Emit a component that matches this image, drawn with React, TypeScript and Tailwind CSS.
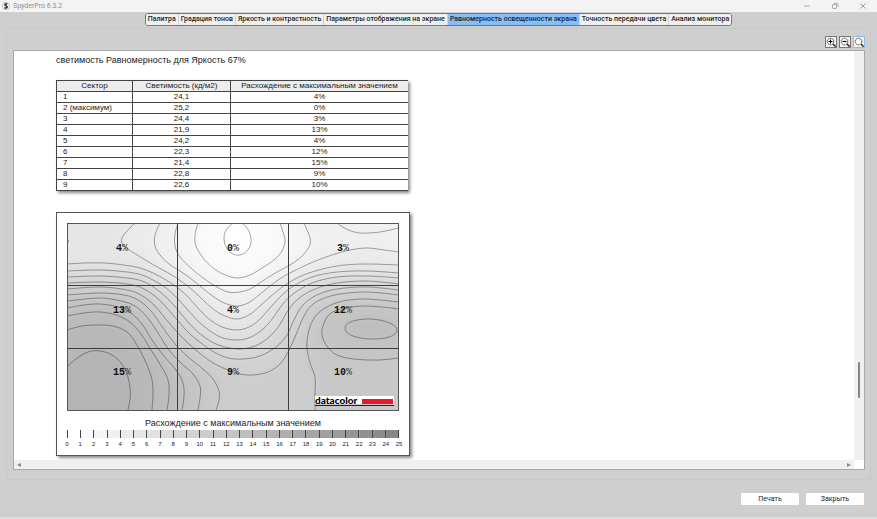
import React from "react";

type Pt = [number, number];

interface Contour {
  line: Pt[];
  rim: Pt[];
}

const OUT_TOP: Pt[] = [[440, 180], [440, 450], [20, 450], [20, 180]];
const OUT_BOTTOM: Pt[] = [[440, 450], [20, 450]];

const contours: Contour[] = [
  {
    line: [[233, 223], [226, 230], [224, 239], [227, 249], [233, 254], [240, 255], [247, 251], [251, 243], [250, 234], [247, 228], [242, 223]],
    rim: [[242, 180], ...OUT_TOP, [233, 180]],
  },
  {
    line: [[198, 223], [195, 235], [196, 246], [203, 258], [212, 267], [223, 274], [237, 278], [250, 275], [262, 268], [274, 260], [282, 251], [285, 241], [283, 232], [280, 223]],
    rim: [[280, 180], ...OUT_TOP, [198, 180]],
  },
  {
    line: [[178, 223], [175, 234], [175, 246], [180, 257], [193, 270], [206, 280], [217, 287], [228, 292], [240, 292], [252, 288], [264, 280], [277, 272], [290, 265], [301, 257], [309, 247], [310, 238], [304, 223]],
    rim: [[304, 180], ...OUT_TOP, [178, 180]],
  },
  {
    line: [[160, 223], [155, 235], [155, 246], [160, 255], [169, 264], [180, 271], [190, 278], [200, 286], [210, 294], [222, 302], [236, 306], [248, 303], [259, 295], [270, 286], [281, 278], [292, 272], [313, 262], [335, 254], [350, 250], [367, 248], [384, 250], [399, 252]],
    rim: [[440, 254], [440, 450], [20, 450], [20, 180], [160, 180]],
  },
  {
    line: [[135, 223], [127, 231], [122, 238], [122, 243], [128, 249], [147, 261], [161, 269], [175, 277], [190, 288], [201, 298], [213, 309], [225, 316], [237, 319], [249, 315], [259, 307], [270, 297], [281, 288], [295, 279], [312, 272], [337, 266], [364, 264], [399, 265]],
    rim: [[440, 266], [440, 450], [20, 450], [20, 180], [135, 180]],
  },
  {
    line: [[67, 264], [85, 263], [105, 263], [124, 265], [140, 268], [153, 273], [166, 280], [178, 288], [188, 297], [198, 308], [209, 319], [222, 327], [237, 330], [249, 327], [259, 320], [270, 308], [280, 297], [292, 287], [312, 277], [337, 272], [367, 271], [399, 273]],
    rim: [[440, 274], ...OUT_BOTTOM, [20, 265]],
  },
  {
    line: [[67, 271], [100, 270], [127, 272], [142, 275], [153, 280], [166, 288], [177, 298], [187, 309], [198, 321], [210, 331], [223, 338], [238, 340], [251, 337], [263, 329], [273, 318], [282, 305], [293, 294], [312, 283], [337, 277], [367, 276], [399, 278]],
    rim: [[440, 279], ...OUT_BOTTOM, [20, 272]],
  },
  {
    line: [[67, 277], [100, 276], [127, 278], [142, 281], [155, 288], [167, 298], [177, 309], [188, 322], [199, 333], [212, 342], [225, 347], [240, 349], [255, 346], [268, 338], [279, 326], [287, 312], [298, 299], [315, 289], [337, 283], [367, 281], [399, 284]],
    rim: [[440, 285], ...OUT_BOTTOM, [20, 278]],
  },
  {
    line: [[67, 283], [100, 282], [127, 284], [142, 288], [156, 297], [167, 308], [178, 321], [189, 333], [201, 343], [214, 352], [228, 358], [243, 359], [260, 356], [276, 347], [287, 335], [294, 320], [303, 305], [317, 295], [337, 289], [367, 287], [399, 290]],
    rim: [[440, 291], ...OUT_BOTTOM, [20, 284]],
  },
  {
    line: [[67, 289], [100, 287], [127, 290], [141, 295], [154, 305], [165, 318], [177, 332], [189, 344], [202, 355], [215, 364], [228, 370], [240, 374], [253, 375], [268, 372], [280, 364], [288, 352], [295, 337], [303, 318], [311, 306], [322, 299], [340, 294], [367, 292], [399, 295]],
    rim: [[440, 296], ...OUT_BOTTOM, [20, 290]],
  },
  {
    line: [[67, 295], [100, 293], [124, 295], [138, 300], [151, 311], [163, 328], [175, 344], [188, 357], [203, 369], [213, 379], [219, 391], [219, 400], [216, 410]],
    rim: [[214, 450], [20, 450], [20, 296]],
  },
  {
    line: [[67, 301], [100, 298], [121, 301], [135, 306], [147, 317], [158, 333], [169, 350], [181, 363], [193, 374], [200, 386], [200, 398], [198, 410]],
    rim: [[196, 450], [20, 450], [20, 302]],
  },
  {
    line: [[67, 308], [84, 305], [100, 304], [118, 307], [131, 313], [142, 324], [152, 340], [163, 355], [176, 370], [183, 383], [184, 396], [182, 410]],
    rim: [[181, 450], [20, 450], [20, 310]],
  },
  {
    line: [[67, 316], [84, 313], [100, 312], [116, 315], [130, 322], [141, 334], [151, 350], [161, 366], [168, 380], [169, 395], [167, 410]],
    rim: [[166, 450], [20, 450], [20, 318]],
  },
  {
    line: [[67, 330], [82, 326], [97, 325], [113, 326], [127, 332], [137, 345], [147, 365], [152, 380], [153, 394], [152, 410]],
    rim: [[151, 450], [20, 450], [20, 335]],
  },
  {
    line: [[67, 367], [76, 359], [88, 352], [100, 351], [112, 355], [121, 363], [127, 374], [130, 388], [130, 399], [128, 410]],
    rim: [[127, 450], [20, 450], [20, 385]],
  },
  {
    line: [[315, 410], [315, 394], [315, 377], [310, 363], [307, 348], [308, 334], [313, 320], [322, 310], [339, 302], [364, 299], [399, 302]],
    rim: [[440, 303], [440, 450], [315, 450]],
  },
  {
    line: [[399, 358], [378, 360], [354, 359], [337, 355], [327, 346], [322, 335], [324, 323], [331, 313], [345, 308], [364, 306], [382, 307], [399, 309]],
    rim: [[440, 311], [440, 357]],
  },
];

function smooth(points: Pt[]): string {
  let d = `M${points[0][0]} ${points[0][1]}`;
  for (let i = 0; i < points.length - 1; i++) {
    const a = points[Math.max(i - 1, 0)];
    const b = points[i];
    const c = points[i + 1];
    const e = points[Math.min(i + 2, points.length - 1)];
    d += ` C${b[0] + (c[0] - a[0]) / 6} ${b[1] + (c[1] - a[1]) / 6} ${c[0] - (e[0] - b[0]) / 6} ${c[1] - (e[1] - b[1]) / 6} ${c[0]} ${c[1]}`;
  }
  return d;
}

const area = (c: Contour) => `${smooth(c.line)} ${c.rim.map((p) => `L${p[0]} ${p[1]}`).join(" ")} Z`;

const ELLIPSE = "M345 328 C345 322 357 319 368 319 C382 319 397 324 397 330 C397 336 386 339 373 339 C358 339 345 335 345 328 Z";

const sectorLabels: [number, number, string][] = [
  [116, 251, "4"], [227, 251, "0"], [337, 251, "3"],
  [113, 313, "13"], [227, 313, "4"], [334, 313, "12"],
  [113, 375, "15"], [227, 375, "9"], [334, 375, "10"],
];

function UniformityMap() {
  return (
    <svg viewBox="67 223 332 188" className="block w-full" role="img" aria-label="Равномерность">
      <defs>
        <clipPath id="frame">
          <rect x="67" y="223" width="332" height="188" />
        </clipPath>
        <filter id="soften" filterUnits="userSpaceOnUse" x="20" y="180" width="420" height="270" colorInterpolationFilters="sRGB">
          <feGaussianBlur stdDeviation="7" />
        </filter>
      </defs>
      <rect x="67" y="223" width="332" height="188" fill="#fff" />
      <g clipPath="url(#frame)">
        <g filter="url(#soften)">
          <rect x="20" y="180" width="420" height="270" fill="#fff" />
          {contours.map((c, i) => (
            <path key={i} d={area(c)} fill="#000" fillOpacity="0.02" />
          ))}
          <path d={ELLIPSE} fill="#000" fillOpacity="0.03" />
        </g>
        <g fill="none" stroke="#000" strokeOpacity="0.38" strokeWidth="0.9">
          {contours.map((c, i) => (
            <path key={i} d={smooth(c.line)} />
          ))}
          <path d={ELLIPSE} />
          <path d="M337 223 C347 231 357 234 368 233 C380 233 389 230 399 228" />
          <path d="M67 239 C69 240 69 242 67 243" />
        </g>
      </g>
      <g fill="none" stroke="#3c3c3c" strokeWidth="1">
        <rect x="67.5" y="223.5" width="331" height="187" stroke="#555" />
        <path d="M177.500 223 V411 M288.500 223 V411 M67 285.500 H399 M67 348.500 H399" />
      </g>
      <g className="font-['Liberation_Mono',monospace] text-[10px] font-bold">
        {sectorLabels.map(([x, y, value]) => (
          <text key={`${x}-${y}`} x={x} y={y} fill="#111">
            {value}
            <tspan fill="#333" className="font-normal">%</tspan>
          </text>
        ))}
      </g>
      <rect x="315" y="396" width="79" height="8" fill="#fff" />
      <text x="315" y="404" fill="#000" className="font-['Lato',sans-serif] text-[10px] font-black">
        datacolor
      </text>
      <rect x="362" y="399" width="31" height="5" fill="#e8192c" />
      <rect x="315" y="405" width="79" height="1" fill="#222" />
    </svg>
  );
}

const steps = Array.from({ length: 26 }, (_, i) => i);

function Legend() {
  return (
    <svg viewBox="0 0 332 20" className="block w-full overflow-visible">
      {steps.slice(0, 25).map((i) => {
        const v = 255 - i * 5;
        return <rect key={i} x={i * 13.28} y="1" width="13.4" height="8" fill={`rgb(${v},${v},${v})`} />;
      })}
      {steps.map((i) => (
        <rect key={i} x={Math.round(i * 13.24)} y="1" width="1" height="8" fill="#444" />
      ))}
      {steps.map((i) => (
        <text key={i} x={i * 13.28} y="17" textAnchor="middle" fill="#222" className="font-['Liberation_Sans',Arial,sans-serif] text-[6px]">
          {i}
        </text>
      ))}
    </svg>
  );
}

const rows = [
  ["1", "24,1", "4%"],
  ["2 (максимум)", "25,2", "0%"],
  ["3", "24,4", "3%"],
  ["4", "21,9", "13%"],
  ["5", "24,2", "4%"],
  ["6", "22,3", "12%"],
  ["7", "21,4", "15%"],
  ["8", "22,8", "9%"],
  ["9", "22,6", "10%"],
];

const tabs = [
  "Палитра",
  "Градация тонов",
  "Яркость и контрастность",
  "Параметры отображения на экране",
  "Равномерность освещенности экрана",
  "Точность передачи цвета",
  "Анализ монитора",
];

function ZoomButton({ label, sign, active }: { label: string; sign?: string; active?: boolean }) {
  return (
    <button
      aria-label={label}
      className={`size-3 border bg-[#f4f4f4] ${active ? "border-[#8fbbe6]" : "border-[#777]"}`}
    >
      <svg viewBox="0 0 10 10" className="block size-full" fill="none" stroke="#222">
        <circle cx="4.500" cy="4.500" r="3.300" strokeWidth="0.8" strokeDasharray="1.6 0.5" fill="#fff" />
        <path d="M7 7 L9.600 9.600" strokeWidth="1.500" />
        {sign && <path d={sign} strokeWidth="1.200" stroke="#000" />}
      </svg>
    </button>
  );
}

export default function App() {
  return (
    <div className="flex h-screen flex-col overflow-hidden bg-[#cfcfcf] font-['Roboto','Open_Sans',sans-serif] text-[#222]">
      <header className="flex h-3 shrink-0 items-center justify-between bg-[#f3f3f3] pl-[2px]">
        <div className="flex items-center gap-[3px] text-[7px] leading-3 text-[#909090]">
          <svg viewBox="0 0 8 8" className="size-2">
            <circle cx="4" cy="4" r="3.600" fill="#fff" stroke="#999" strokeWidth="0.6" />
            <path d="M5.400 2.300 C4.600 1.700 2.800 1.800 2.900 3 C3 4.200 5.300 3.700 5.300 5 C5.200 6.200 3.400 6.300 2.500 5.600" fill="none" stroke="#111" strokeWidth="1.300" />
          </svg>
          <span>SpyderPro 6.3.2</span>
        </div>
        <div className="flex items-center gap-5 pr-[10px]">
          <button aria-label="Свернуть" className="size-2">
            <svg viewBox="0 0 8 8" className="block size-full" fill="none" stroke="#999" strokeWidth="0.8"><path d="M1 4 H7" /></svg>
          </button>
          <button aria-label="Восстановить" className="size-2">
            <svg viewBox="0 0 8 8" className="block size-full" fill="none" stroke="#999" strokeWidth="0.8">
              <rect x="1.500" y="2.500" width="4" height="4" rx="0.600" />
              <path d="M3 1.200 H6 Q6.900 1.200 6.900 2.200 V5" />
            </svg>
          </button>
          <button aria-label="Закрыть окно" className="size-2">
            <svg viewBox="0 0 8 8" className="block size-full" fill="none" stroke="#888" strokeWidth="0.8"><path d="M1.500 1.500 L6.500 6.500 M6.500 1.500 L1.500 6.500" /></svg>
          </button>
        </div>
      </header>

      <nav className="mt-px flex shrink-0 justify-center">
        <div className="flex h-[13px] overflow-hidden rounded-[3px] border border-[#777] bg-[#f0f0f0]">
          {tabs.map((tab, i) => (
            <button
              key={tab}
              className={`px-[2px] text-[7px] leading-[11px] font-medium whitespace-nowrap text-[#222] ${
                i === 4 ? "bg-[#86bff8]" : "bg-[#f0f0f0]"
              } ${i > 0 ? "border-l border-[#d0d0d0]" : ""}`}
            >
              {tab}
            </button>
          ))}
        </div>
      </nav>

      <main className="mx-[6px] mt-[2px] flex min-h-0 flex-1 flex-col rounded-[3px] border border-[#c8c8c8] pr-[5px] pb-[9px] pl-[6px]">
        <div className="mt-[7px] flex shrink-0 justify-end gap-[2px]">
          <ZoomButton label="Увеличить" sign="M2.500 4.500 H6.500 M4.500 2.500 V6.500" />
          <ZoomButton label="Уменьшить" sign="M2.500 4.500 H6.500" />
          <ZoomButton label="По размеру" active />
        </div>

        <div className="mt-[2px] flex min-h-0 flex-1 flex-col border border-[#a8a8a8] bg-white">
          <div className="flex min-h-0 flex-1">
            <div className="min-w-0 flex-1 overflow-hidden pl-[42px] font-['Liberation_Sans',Arial,sans-serif] text-[#222]">
              <h1 className="mt-[3px] text-[9px] leading-3">светимость Равномерность для Яркость 67%</h1>
              <table className="mt-[14px] w-[352px] table-fixed border-collapse border-y border-l border-[#444] text-[8px] leading-[10px] shadow-[2px_2px_3px_#888]">
                <colgroup>
                  <col className="w-[76px]" />
                  <col className="w-[98px]" />
                  <col />
                </colgroup>
                <thead>
                  <tr className="h-[11px] bg-[#ececec]">
                    <th className="border-r border-b border-[#444] p-0 font-normal">Сектор</th>
                    <th className="border-r border-b border-[#444] p-0 font-normal">Светимость (кд/м2)</th>
                    <th className="border-b border-[#444] p-0 font-normal">Расхождение с максимальным значением</th>
                  </tr>
                </thead>
                <tbody>
                  {rows.map(([sector, value, diff]) => (
                    <tr key={sector} className="h-[11px] border-b border-[#444] text-center">
                      <td className="border-r border-[#444] p-0 pl-[6px] text-left">{sector}</td>
                      <td className="border-r border-[#444] p-0">{value}</td>
                      <td className="p-0">{diff}</td>
                    </tr>
                  ))}
                </tbody>
              </table>

              <figure className="mt-[21px] w-[354px] border border-[#555] bg-white px-[10px] pt-[10px] pb-[6px] shadow-[2px_2px_3px_#888]">
                <UniformityMap />
                <figcaption className="mt-[6px] text-center text-[9px] leading-3">Расхождение с максимальным значением</figcaption>
                <Legend />
              </figure>
            </div>
            <div className="flex w-[10px] shrink-0 justify-center bg-[#f0f0f0] pt-[311px]">
              <div className="h-9 w-[2px] rounded-full bg-[#858585]" />
            </div>
          </div>
          <div className="flex h-[9px] shrink-0">
            <div className="flex flex-1 items-center justify-between bg-[#f0f0f0] px-[3px]">
              <svg viewBox="0 0 4 4" className="size-1" fill="#888"><path d="M4 0 V4 L0 2 Z" /></svg>
              <svg viewBox="0 0 4 4" className="size-1" fill="#888"><path d="M0 0 V4 L4 2 Z" /></svg>
            </div>
            <div className="w-[10px] bg-white" />
          </div>
        </div>
      </main>

      <footer className="flex h-[39px] shrink-0 items-center justify-end gap-[7px] border-b-2 border-[#dedede] pr-[13px]">
        <button className="h-3 w-[58px] rounded-[1px] bg-[#fdfdfd] text-[7px] leading-3">Печать</button>
        <button className="h-3 w-[58px] rounded-[1px] bg-[#fdfdfd] text-[7px] leading-3">Закрыть</button>
      </footer>
    </div>
  );
}
